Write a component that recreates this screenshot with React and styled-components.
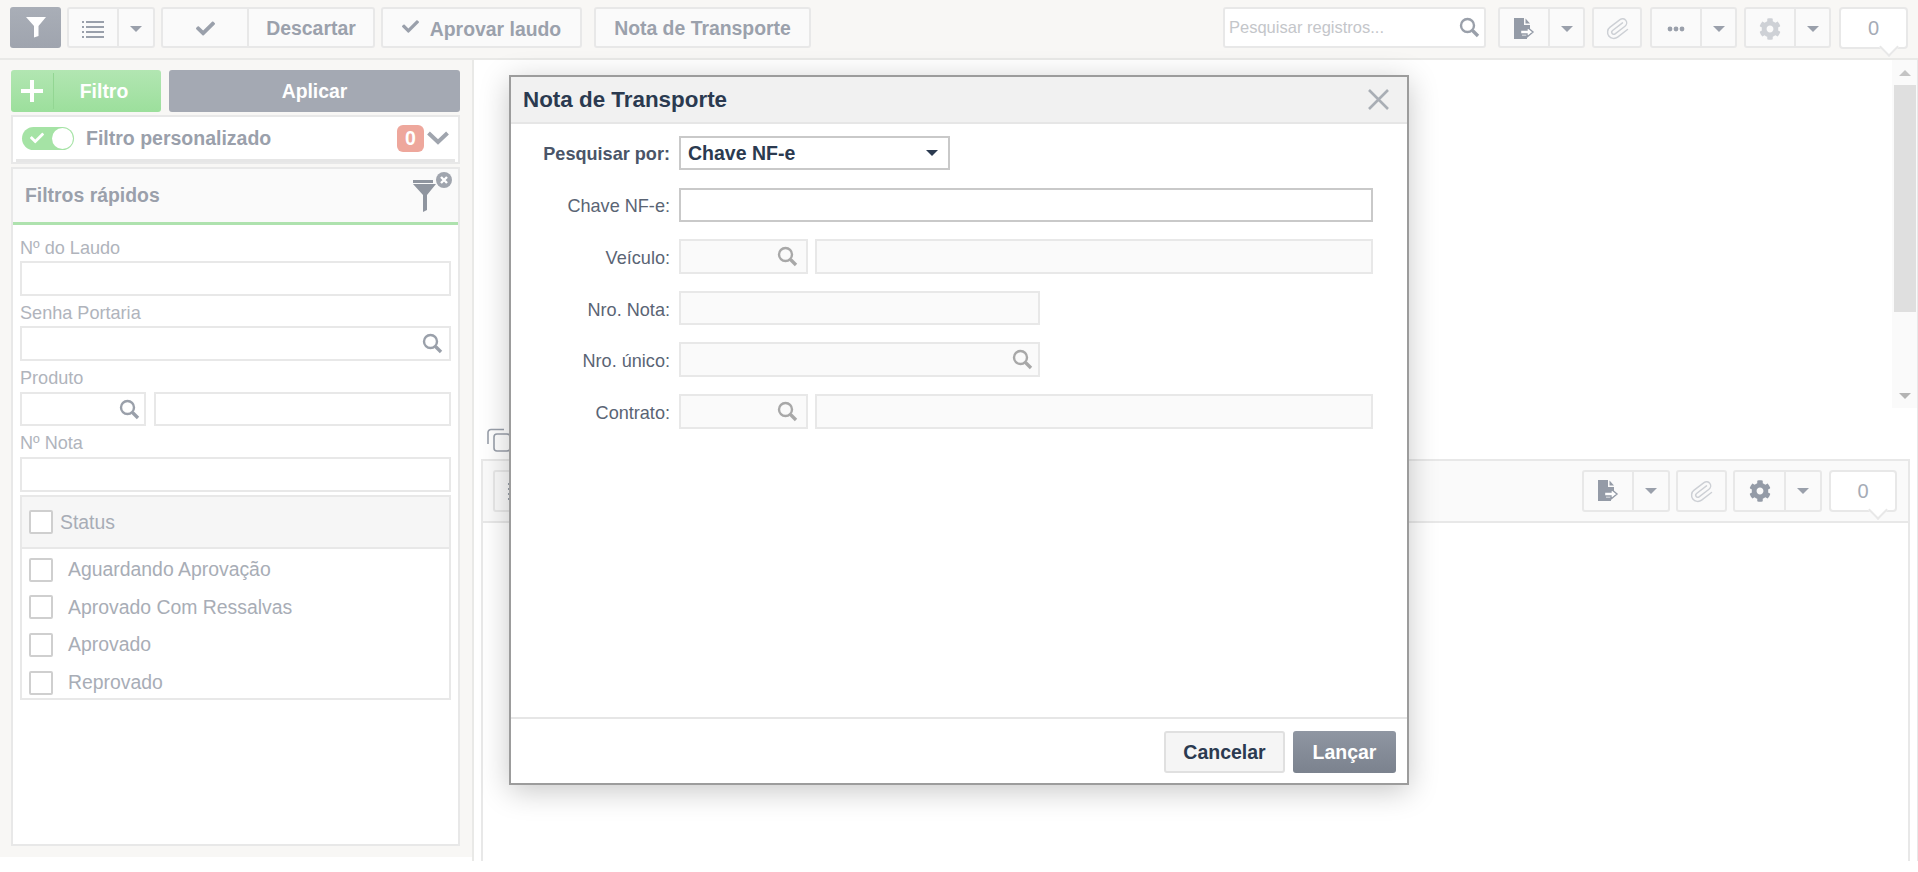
import React from 'react'
import styled, { createGlobalStyle } from 'styled-components'
import { FaCheck, FaCog } from 'react-icons/fa'
import { Paperclip } from 'lucide-react'

const GlobalStyle = createGlobalStyle`
  html, body {
    margin: 0;
    background: #fff;
    overflow: hidden;
  }
  * {
    box-sizing: border-box;
  }
  body {
    font-family: "Liberation Sans", Arial, sans-serif;
  }
`

const Page = styled.div`
  position: relative;
  width: 1918px;
  height: 872px;
  overflow: hidden;
  background: #fff;
`

const Toolbar = styled.div`
  display: flex;
  justify-content: space-between;
  height: 60px;
  padding: 7px 10px 0 10px;
  background: #f8f7f5;
  border-bottom: 2px solid #e9e9e7;
`

const ToolSide = styled.div`
  display: flex;
  gap: ${(p) => p.$gap || 6}px;
`

const Group = styled.div`
  display: flex;
  height: ${(p) => p.$h || 41}px;
  border: 2px solid #e8e8e8;
  border-radius: 3px;
  background: #fafafa;
  margin-left: ${(p) => p.$before || 0}px;
`

const Segment = styled.div`
  display: flex;
  align-items: center;
  justify-content: center;
  width: ${(p) => p.$w}px;
  height: 100%;
  padding-top: 2px;
  color: #9ba1ac;
  font-size: 19.4px;
  font-weight: 700;
  white-space: nowrap;
  & + & {
    border-left: 2px solid #e8e8e8;
  }
`

const LowerText = styled.span`
  margin-top: 2px;
`

const FilterToggle = styled.div`
  display: flex;
  align-items: center;
  justify-content: center;
  width: 51px;
  height: 41px;
  border-radius: 3px;
  background: linear-gradient(#a9aeb7, #9fa4ae);
`

const Caret = styled.span`
  display: block;
  width: 0;
  height: 0;
  border-left: 6px solid transparent;
  border-right: 6px solid transparent;
  border-top: 6px solid ${(p) => p.$color || '#9aa0ab'};
`

const SearchBox = styled.div`
  display: flex;
  align-items: center;
  justify-content: space-between;
  width: 263px;
  height: 41px;
  margin-right: 5px;
  padding: 0 4px;
  border: 2px solid #e8e8e8;
  border-radius: 3px;
  background: #fff;
  color: #c4c6ca;
  font-size: 16.5px;
`

const CountBubble = styled.div`
  position: relative;
  display: flex;
  align-items: center;
  justify-content: center;
  width: ${(p) => p.$w}px;
  height: 42px;
  margin-left: ${(p) => p.$before || 0}px;
  border: 2px solid #e8e8e8;
  border-radius: 4px;
  background: #fff;
  color: #a5abb6;
  font-size: 20px;
  &::after {
    content: '';
    position: absolute;
    right: 10px;
    bottom: -7px;
    width: 12px;
    height: 12px;
    background: #fff;
    border-right: 2px solid #e8e8e8;
    border-bottom: 2px solid #e8e8e8;
    transform: rotate(45deg);
  }
`

const Body = styled.div`
  display: flex;
  height: 801px;
`

const Sidebar = styled.div`
  flex: none;
  width: 474px;
  height: 801px;
  border-right: 2px solid #e9e9e7;
  background: linear-gradient(#f8f7f5 0 797px, #fff 797px);
  padding: 10px 12px 0 11px;
`

const SideActions = styled.div`
  display: flex;
  gap: 8px;
  height: 42px;
`

const AddFilter = styled.div`
  display: flex;
  width: 150px;
  border-radius: 3px;
  background: linear-gradient(#b2e6b2, #9cdf9c);
  color: #fff;
  font-size: 19.4px;
  font-weight: 700;
`

const AddPlus = styled.div`
  display: flex;
  align-items: center;
  justify-content: center;
  width: 43px;
  margin: 3px 0;
  border-right: 1px solid #93d693;
`

const AddLabel = styled.div`
  flex: 1;
  display: flex;
  align-items: center;
  justify-content: center;
  padding-right: 7px;
`

const ApplyButton = styled.div`
  flex: 1;
  display: flex;
  align-items: center;
  justify-content: center;
  border-radius: 3px;
  background: #a4a9b3;
  color: #fff;
  font-size: 19.4px;
  font-weight: 700;
`

const CustomFilter = styled.div`
  position: relative;
  display: flex;
  align-items: center;
  height: 49px;
  margin-top: 3px;
  padding: 0 9px 3px 9px;
  background: #fff;
  border: 2px solid #e8e8e8;
  &::after {
    content: '';
    position: absolute;
    left: 3px;
    right: 3px;
    bottom: 0;
    height: 3px;
    background: #e6e6e6;
  }
`

const Switch = styled.div`
  display: flex;
  align-items: center;
  justify-content: space-between;
  width: 52px;
  height: 23px;
  padding: 0 1px 0 8px;
  border-radius: 12px;
  background: #a5e3a5;
  color: #fff;
`

const SwitchKnob = styled.span`
  display: block;
  width: 21px;
  height: 21px;
  border-radius: 50%;
  background: #fff;
`

const CustomLabel = styled.div`
  flex: 1;
  margin-left: 12px;
  color: #9aa0ab;
  font-size: 19.5px;
  font-weight: 700;
`

const CountBadge = styled.div`
  display: flex;
  align-items: center;
  justify-content: center;
  width: 27px;
  height: 27px;
  margin-right: 3px;
  border-radius: 6px;
  background: #eea79c;
  color: #fff;
  font-size: 19.5px;
  font-weight: 700;
`

const QuickPanel = styled.div`
  height: 679px;
  margin-top: 3px;
  border: 2px solid #e8e8e8;
  background: #fff;
`

const QuickHeader = styled.div`
  display: flex;
  align-items: center;
  justify-content: space-between;
  height: 56px;
  padding: 0 5px 0 12px;
  background: #fafafa;
  border-bottom: 3px solid #aee2ae;
  color: #9aa0ab;
  font-size: 19.4px;
  font-weight: 700;
`

const FunnelSlot = styled.span`
  display: flex;
  align-self: flex-start;
  margin-top: 3px;
`

const QuickFields = styled.div`
  display: flex;
  flex-direction: column;
  padding: 8px 7px 0 7px;
`

const SideLabel = styled.div`
  flex: none;
  height: ${(p) => p.$h || 28}px;
  padding-top: ${(p) => p.$top || 5}px;
  color: #b0b4bc;
  font-size: 18.1px;
  line-height: 20px;
`

const InputRow = styled.div`
  display: flex;
  gap: ${(p) => p.$gap || 0}px;
`

const Input = styled.div`
  display: flex;
  align-items: center;
  justify-content: flex-end;
  flex: ${(p) => (p.$grow ? 1 : 'none')};
  width: ${(p) => (p.$w ? `${p.$w}px` : 'auto')};
  height: ${(p) => p.$h || 35}px;
  padding-right: ${(p) => p.$pad || 4}px;
  background: #fff;
  border: 2px solid #e8e8e8;
`

const StatusBox = styled.div`
  flex: none;
  height: 205px;
  margin-top: 3px;
  overflow: hidden;
  border: 2px solid #e8e8e8;
`

const StatusHead = styled.div`
  display: flex;
  align-items: center;
  height: 52px;
  margin-bottom: 2px;
  padding-left: 7px;
  background: #f6f6f6;
  border-bottom: 2px solid #e8e8e8;
  color: #a8adb6;
  font-size: 19.4px;
`

const StatusRow = styled.div`
  display: flex;
  align-items: center;
  height: 37.6px;
  padding-left: 7px;
  color: #a8adb6;
  font-size: 19.4px;
`

const Check = styled.span`
  flex: none;
  display: block;
  width: 24px;
  height: 24px;
  margin-right: ${(p) => p.$gap}px;
  border: 2px solid #cfcfcf;
  border-radius: 2px;
  background: #fff;
`

const Main = styled.div`
  flex: 1;
  display: flex;
  flex-direction: column;
  height: 801px;
  border-right: 1px solid #e8e8e8;
`

const TopArea = styled.div`
  display: flex;
  justify-content: flex-end;
  height: 348px;
`

const Scroll = styled.div`
  display: flex;
  flex-direction: column;
  width: 25px;
  padding: 0 1px 0 2px;
  background: #fafafa;
`

const ScrollCap = styled.div`
  display: flex;
  align-items: center;
  justify-content: center;
  height: 25px;
`

const ScrollThumb = styled.div`
  height: 227px;
  background: #dfdfdf;
`

const ScrollTrack = styled.div`
  flex: 1;
`

const UpCaret = styled.span`
  display: block;
  width: 0;
  height: 0;
  border-left: 6px solid transparent;
  border-right: 6px solid transparent;
  border-bottom: 6px solid #c4c4c4;
`

const CopyBar = styled.div`
  display: flex;
  align-items: center;
  height: 51px;
  padding: 13px 0 0 13px;
`

const Lower = styled.div`
  flex: 1;
  display: flex;
  flex-direction: column;
  margin: 0 7px 0 7px;
  border-top: 2px solid #e8e8e8;
  border-left: 2px solid #e8e8e8;
  border-right: 2px solid #e8e8e8;
`

const LowerBar = styled.div`
  display: flex;
  justify-content: space-between;
  height: 62px;
  padding: 9px 11px 0 10px;
  background: #fafafa;
  border-bottom: 2px solid #e8e8e8;
  ${Segment} {
    padding-top: 0;
  }
`

const LowerContent = styled.div`
  flex: 1;
  background: #fff;
`

const Modal = styled.div`
  position: absolute;
  left: 509px;
  top: 75px;
  display: flex;
  flex-direction: column;
  width: 900px;
  height: 710px;
  background: #fff;
  border: 2px solid #9c9c9c;
  box-shadow: 0 6px 28px rgba(0, 0, 0, 0.22);
`

const ModalHeader = styled.div`
  display: flex;
  align-items: center;
  justify-content: space-between;
  flex: none;
  height: 47px;
  padding: 0 18px 0 12px;
  background: #f1f1f1;
  border-bottom: 2px solid #e6e6e6;
  color: #2b3a50;
  font-size: 22.4px;
  font-weight: 700;
`

const ModalForm = styled.div`
  flex: 1;
  display: flex;
  flex-direction: column;
  gap: 17px;
  padding: 12px 0 0 0;
`

const FormRow = styled.div`
  display: flex;
  align-items: center;
  height: 34.6px;
`

const FormLabel = styled.div`
  flex: none;
  width: 159px;
  margin-right: 9px;
  padding-top: ${(p) => (p.$strong ? 2 : 4)}px;
  text-align: right;
  color: ${(p) => (p.$strong ? '#4a5568' : '#5a6474')};
  font-size: 18.1px;
  font-weight: ${(p) => (p.$strong ? 700 : 400)};
  white-space: nowrap;
`

const Select = styled.div`
  display: flex;
  align-items: center;
  justify-content: space-between;
  width: 271px;
  height: 34px;
  padding: 0 10px 0 7px;
  border: 2px solid #c9c9c9;
  color: #2b3a50;
  font-size: 19.5px;
  font-weight: 700;
`

const ModalInput = styled.div`
  display: flex;
  align-items: center;
  justify-content: flex-end;
  width: ${(p) => p.$w}px;
  height: 34.6px;
  margin-left: ${(p) => p.$gap || 0}px;
  padding-right: ${(p) => p.$pad || 4}px;
  background: ${(p) => (p.$active ? '#fff' : '#fafafa')};
  border: 2px solid ${(p) => (p.$active ? '#c9c9c9' : '#e8e8e8')};
`

const ModalFooter = styled.div`
  display: flex;
  justify-content: flex-end;
  gap: 8px;
  flex: none;
  height: 66px;
  padding: 12px 11px 0 0;
  border-top: 2px solid #e6e6e6;
`

const CancelButton = styled.div`
  display: flex;
  align-items: center;
  justify-content: center;
  width: 121px;
  height: 42px;
  border: 2px solid #e0e0e0;
  border-radius: 3px;
  background: #f5f5f5;
  color: #2b3a50;
  font-size: 19.5px;
  font-weight: 700;
`

const SubmitButton = styled.div`
  display: flex;
  align-items: center;
  justify-content: center;
  width: 103px;
  height: 42px;
  border-radius: 3px;
  background: linear-gradient(#8f96a2, #7b828e);
  color: #fff;
  font-size: 19.5px;
  font-weight: 700;
`

const SearchIcon = ({ color = '#9aa0aa', size = 21 }) => (
  <svg width={size} height={size} viewBox="0 0 21 21" fill="none">
    <circle cx="8.5" cy="8.5" r="6.5" stroke={color} strokeWidth="2.4" />
    <path d="M13.5 13.5 L19 19" stroke={color} strokeWidth="3.4" />
  </svg>
)

const FunnelIcon = () => (
  <svg width="20" height="21" viewBox="0 0 20 21">
    <path d="M0 0 H20 L12.5 9 V19 L8 20.5 V9 Z" fill="#fff" />
  </svg>
)

const ListIcon = () => (
  <svg width="22" height="18" viewBox="0 0 22 18" fill="#9aa0ab">
    <rect x="0" y="1" width="2" height="2" />
    <rect x="4" y="1" width="18" height="2" />
    <rect x="0" y="6" width="2" height="2" />
    <rect x="4" y="6" width="18" height="2" />
    <rect x="0" y="11" width="2" height="2" />
    <rect x="4" y="11" width="18" height="2" />
    <rect x="0" y="16" width="2" height="2" />
    <rect x="4" y="16" width="18" height="2" />
  </svg>
)

const ExportIcon = () => (
  <svg width="22" height="22" viewBox="0 0 22 22">
    <path d="M1 0 H11 V7 H17 V12 H9 V9 L9 21 H1 Z" fill="#949ba7" />
    <path d="M12.5 0.5 L17 5.5 H12.5 Z" fill="#949ba7" />
    <path d="M7.5 12 H14 V9 L20 14 L14 19 V16 H7.5 Z" fill="#fff" stroke="#949ba7" strokeWidth="1.4" />
    <rect x="1" y="17" width="5" height="4" fill="#949ba7" />
    <rect x="6" y="17.5" width="8" height="3.5" fill="#949ba7" />
  </svg>
)

const ClipIcon = styled(Paperclip).attrs({ size: 25, strokeWidth: 1.4, color: '#cdd0d5' })`
  transform: rotate(8deg);
`

const DotsIcon = () => (
  <svg width="18" height="6" viewBox="0 0 18 6" fill="#9aa0ab">
    <circle cx="3" cy="3" r="2.4" />
    <circle cx="9" cy="3" r="2.4" />
    <circle cx="15" cy="3" r="2.4" />
  </svg>
)

const ClearFilterIcon = () => (
  <svg width="40" height="42" viewBox="0 0 40 42">
    <rect x="0" y="8" width="20" height="3" fill="#8f959f" />
    <path d="M0 12 H23 L14 23 V38 L10 40 V23 Z" fill="#8f959f" />
    <circle cx="31" cy="8" r="8" fill="#a0a5ae" />
    <path d="M28 5 L34 11 M34 5 L28 11" stroke="#fff" strokeWidth="2.4" />
  </svg>
)

const CopyIcon = () => (
  <svg width="24" height="24" viewBox="0 0 24 24" fill="none" stroke="#9aa0ab" strokeWidth="1.6">
    <path d="M17 1.5 H4 A3 3 0 0 0 1 4.5 V16" />
    <rect x="7" y="6" width="16" height="17" rx="3" />
  </svg>
)

const CloseIcon = () => (
  <svg width="21" height="21" viewBox="0 0 21 21" stroke="#a9aeb5" strokeWidth="2.6">
    <path d="M1 1 L20 20 M20 1 L1 20" />
  </svg>
)

const Chevron = () => (
  <svg width="22" height="14" viewBox="0 0 22 14" fill="none" stroke="#a0a5ae" strokeWidth="4">
    <path d="M1.5 2 L11 11 L20.5 2" />
  </svg>
)

const Plus = () => (
  <svg width="22" height="22" viewBox="0 0 22 22" fill="#fff">
    <rect x="9" y="0" width="4" height="22" />
    <rect x="0" y="9" width="22" height="4" />
  </svg>
)

const statusOptions = ['Aguardando Aprovação', 'Aprovado Com Ressalvas', 'Aprovado', 'Reprovado']

const App = () => {
  return (
    <Page>
      <GlobalStyle />
      <Toolbar>
        <ToolSide>
          <FilterToggle>
            <FunnelIcon />
          </FilterToggle>
          <Group>
            <Segment $w={48}>
              <ListIcon />
            </Segment>
            <Segment $w={36}>
              <Caret />
            </Segment>
          </Group>
          <Group>
            <Segment $w={84}>
              <FaCheck size={19} color="#9aa0ab" />
            </Segment>
            <Segment $w={126}>Descartar</Segment>
          </Group>
          <Group>
            <Segment $w={197}>
              <FaCheck size={17} color="#9aa0ab" style={{ marginRight: 11, marginTop: -4 }} />
              <LowerText>Aprovar laudo</LowerText>
            </Segment>
          </Group>
          <Group $before={6}>
            <Segment $w={213}>Nota de Transporte</Segment>
          </Group>
        </ToolSide>
        <ToolSide $gap={7}>
          <SearchBox>
            Pesquisar registros...
            <SearchIcon />
          </SearchBox>
          <Group>
            <Segment $w={48}>
              <ExportIcon />
            </Segment>
            <Segment $w={35}>
              <Caret />
            </Segment>
          </Group>
          <Group>
            <Segment $w={46}>
              <ClipIcon />
            </Segment>
          </Group>
          <Group $before={1}>
            <Segment $w={48}>
              <DotsIcon />
            </Segment>
            <Segment $w={35}>
              <Caret />
            </Segment>
          </Group>
          <Group>
            <Segment $w={48}>
              <FaCog size={22} color="#ced1d6" />
            </Segment>
            <Segment $w={35}>
              <Caret />
            </Segment>
          </Group>
          <CountBubble $w={69} $before={1}>0</CountBubble>
        </ToolSide>
      </Toolbar>
      <Body>
        <Sidebar>
          <SideActions>
            <AddFilter>
              <AddPlus>
                <Plus />
              </AddPlus>
              <AddLabel>Filtro</AddLabel>
            </AddFilter>
            <ApplyButton>Aplicar</ApplyButton>
          </SideActions>
          <CustomFilter>
            <Switch>
              <FaCheck size={14} />
              <SwitchKnob />
            </Switch>
            <CustomLabel>Filtro personalizado</CustomLabel>
            <CountBadge>0</CountBadge>
            <Chevron />
          </CustomFilter>
          <QuickPanel>
            <QuickHeader>
              Filtros rápidos
              <FunnelSlot>
                <ClearFilterIcon />
              </FunnelSlot>
            </QuickHeader>
            <QuickFields>
              <SideLabel>Nº do Laudo</SideLabel>
              <Input />
              <SideLabel $h={30} $top={7}>Senha Portaria</SideLabel>
              <Input $pad={6}>
                <SearchIcon />
              </Input>
              <SideLabel $h={31} $top={7}>Produto</SideLabel>
              <InputRow $gap={8}>
                <Input $w={126} $h={34}>
                  <SearchIcon />
                </Input>
                <Input $grow $h={34} />
              </InputRow>
              <SideLabel $h={31} $top={7}>Nº Nota</SideLabel>
              <Input />
              <StatusBox>
                <StatusHead>
                  <Check $gap={7} />
                  Status
                </StatusHead>
                {statusOptions.map((option) => (
                  <StatusRow key={option}>
                    <Check $gap={15} />
                    {option}
                  </StatusRow>
                ))}
              </StatusBox>
            </QuickFields>
          </QuickPanel>
        </Sidebar>
        <Main>
          <TopArea>
            <Scroll>
              <ScrollCap>
                <UpCaret />
              </ScrollCap>
              <ScrollThumb />
              <ScrollTrack />
              <ScrollCap>
                <Caret $color="#b4b4b4" />
              </ScrollCap>
            </Scroll>
          </TopArea>
          <CopyBar>
            <CopyIcon />
          </CopyBar>
          <Lower>
            <LowerBar>
              <Group $h={42}>
                <Segment $w={48}>
                  <ListIcon />
                </Segment>
              </Group>
              <ToolSide>
                <Group $h={42}>
                  <Segment $w={48}>
                    <ExportIcon />
                  </Segment>
                  <Segment $w={36}>
                    <Caret />
                  </Segment>
                </Group>
                <Group $h={42}>
                  <Segment $w={47}>
                    <ClipIcon />
                  </Segment>
                </Group>
                <Group $h={42}>
                  <Segment $w={49}>
                    <FaCog size={22} color="#949ba7" />
                  </Segment>
                  <Segment $w={36}>
                    <Caret />
                  </Segment>
                </Group>
                <CountBubble $w={68} $before={1}>0</CountBubble>
              </ToolSide>
            </LowerBar>
            <LowerContent />
          </Lower>
        </Main>
      </Body>
      <Modal>
        <ModalHeader>
          Nota de Transporte
          <CloseIcon />
        </ModalHeader>
        <ModalForm>
          <FormRow>
            <FormLabel $strong>Pesquisar por:</FormLabel>
            <Select>
              Chave NF-e
              <Caret $color="#2b3a50" />
            </Select>
          </FormRow>
          <FormRow>
            <FormLabel>Chave NF-e:</FormLabel>
            <ModalInput $w={694} $active />
          </FormRow>
          <FormRow>
            <FormLabel>Veículo:</FormLabel>
            <ModalInput $w={129} $pad={8}>
              <SearchIcon color="#a8a8a8" />
            </ModalInput>
            <ModalInput $w={558} $gap={7} />
          </FormRow>
          <FormRow>
            <FormLabel>Nro. Nota:</FormLabel>
            <ModalInput $w={361} />
          </FormRow>
          <FormRow>
            <FormLabel>Nro. único:</FormLabel>
            <ModalInput $w={361} $pad={5}>
              <SearchIcon color="#a8a8a8" />
            </ModalInput>
          </FormRow>
          <FormRow>
            <FormLabel>Contrato:</FormLabel>
            <ModalInput $w={129} $pad={8}>
              <SearchIcon color="#a8a8a8" />
            </ModalInput>
            <ModalInput $w={558} $gap={7} />
          </FormRow>
        </ModalForm>
        <ModalFooter>
          <CancelButton>Cancelar</CancelButton>
          <SubmitButton>Lançar</SubmitButton>
        </ModalFooter>
      </Modal>
    </Page>
  )
}

export default App
